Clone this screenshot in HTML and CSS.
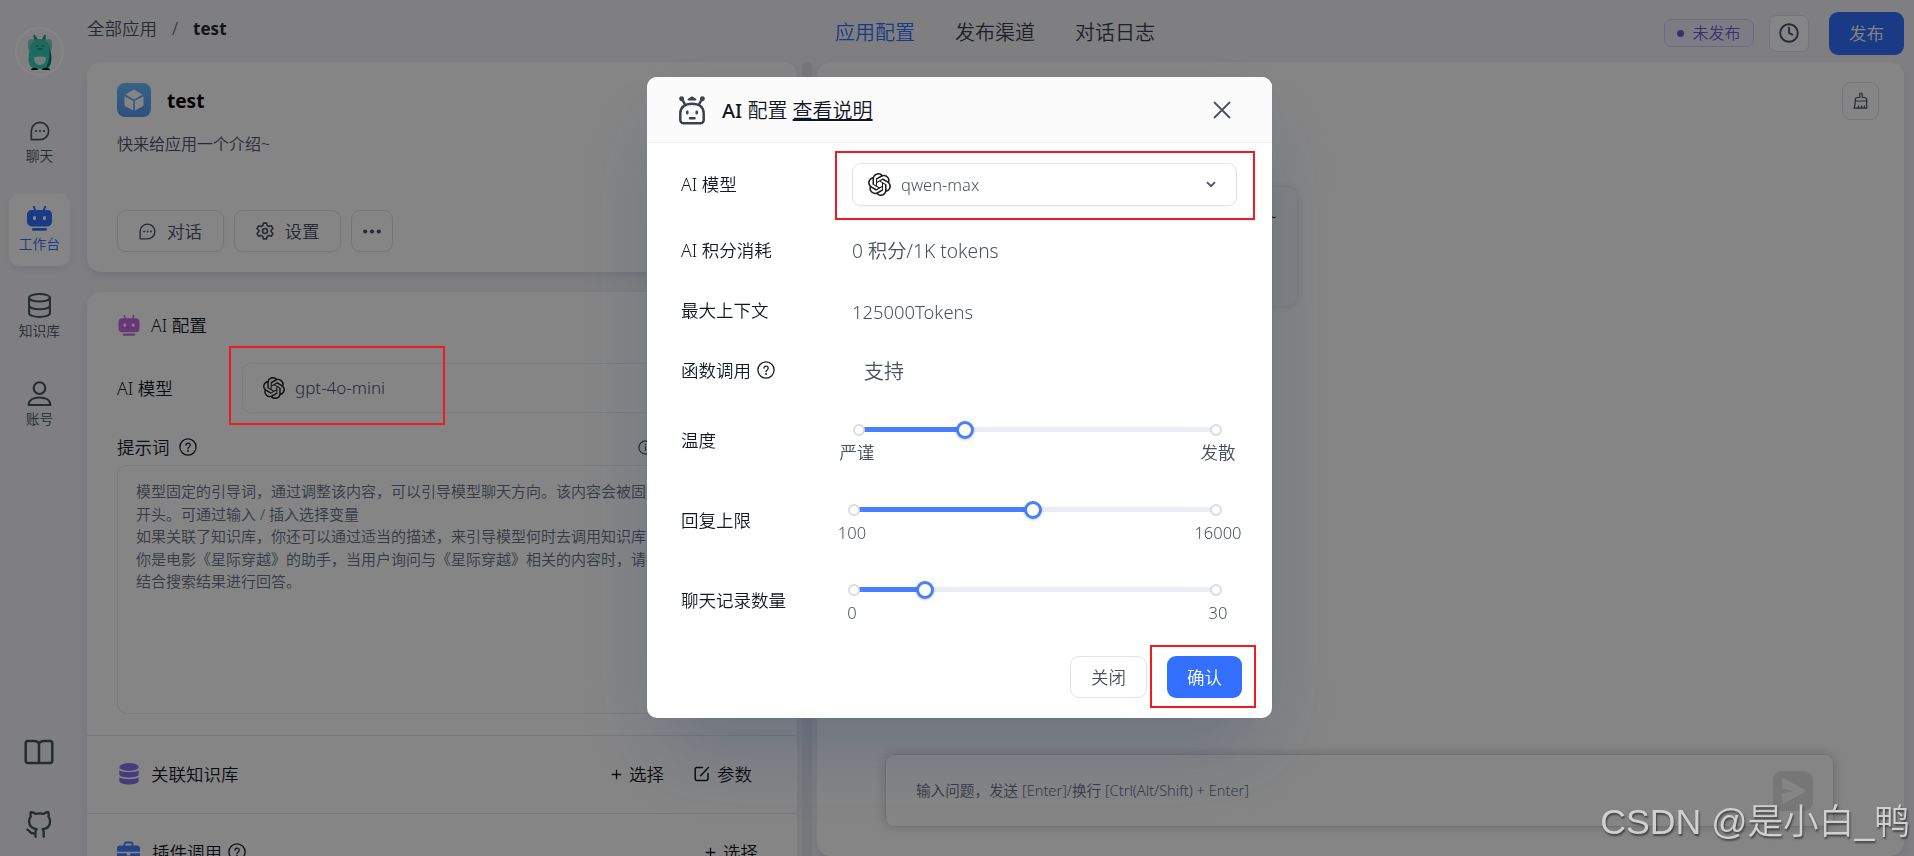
FILE: index.html
```
<!DOCTYPE html>
<html lang="zh-CN">
<head>
    <meta charset="UTF-8">
    <meta name="viewport" content="width=device-width, initial-scale=1.0">
    <title>test - 应用配置</title>
    <link rel="stylesheet" href="styles.css">
</head>
<body>
    <!-- Shared icons -->
    <svg class="sprite" xmlns="http://www.w3.org/2000/svg">
        <symbol id="i-chat" viewBox="0 0 24 24">
            <path d="M1.600 22.400V12A10.400 10.400 0 1 1 12 22.400z" fill="none" stroke="currentColor" stroke-width="2" stroke-linejoin="round"/>
            <circle cx="7.200" cy="12" r="1.300" fill="currentColor"/>
            <circle cx="12" cy="12" r="1.300" fill="currentColor"/>
            <circle cx="16.800" cy="12" r="1.300" fill="currentColor"/>
        </symbol>
        <symbol id="i-robot" viewBox="0 0 24 24">
            <path d="M6.600.6 7.800 4M17.400.6 16.200 4" stroke="currentColor" stroke-width="1.800" stroke-linecap="round"/>
            <path fill="currentColor" fill-rule="evenodd" d="M4.500 3.800h15A4.500 4.500 0 0 1 24 8.300v6.800a4.500 4.500 0 0 1-4.500 4.500h-15A4.500 4.500 0 0 1 0 15.100V8.300a4.500 4.500 0 0 1 4.500-4.500zM7.200 9.600a1.500 1.500 0 0 0-1.500 1.500v1a1.500 1.500 0 0 0 3 0v-1a1.500 1.500 0 0 0-1.500-1.500zm9.600 0a1.500 1.500 0 0 0-1.500 1.500v1a1.500 1.500 0 0 0 3 0v-1a1.500 1.500 0 0 0-1.500-1.500z"/>
            <rect x="4.800" y="21.200" width="14.400" height="2.500" rx="1.200" fill="currentColor"/>
        </symbol>
        <symbol id="i-openai" viewBox="0 0 24 24">
            <path fill="currentColor" d="M22.2819 9.8211a5.9847 5.9847 0 0 0-.5157-4.9108 6.0462 6.0462 0 0 0-6.5098-2.9A6.0651 6.0651 0 0 0 4.9807 4.1818a5.9847 5.9847 0 0 0-3.9977 2.9 6.0462 6.0462 0 0 0 .7427 7.0966 5.98 5.98 0 0 0 .511 4.9107 6.051 6.051 0 0 0 6.5146 2.9001A5.9847 5.9847 0 0 0 13.2599 24a6.0557 6.0557 0 0 0 5.7718-4.2058 5.9894 5.9894 0 0 0 3.9977-2.9001 6.0557 6.0557 0 0 0-.7475-7.0729zm-9.022 12.6081a4.4755 4.4755 0 0 1-2.8764-1.0408l.1419-.0804 4.7783-2.7582a.7948.7948 0 0 0 .3927-.6813v-6.7369l2.02 1.1686a.071.071 0 0 1 .038.052v5.5826a4.504 4.504 0 0 1-4.4945 4.4944zm-9.6607-4.1254a4.4708 4.4708 0 0 1-.5346-3.0137l.142.0852 4.783 2.7582a.7712.7712 0 0 0 .7806 0l5.8428-3.3685v2.3324a.0804.0804 0 0 1-.0332.0615L9.74 19.9502a4.4992 4.4992 0 0 1-6.1408-1.6464zM2.3408 7.8956a4.485 4.485 0 0 1 2.3655-1.9728V11.6a.7664.7664 0 0 0 .3879.6765l5.8144 3.3543-2.0201 1.1685a.0757.0757 0 0 1-.071 0l-4.8303-2.7865A4.504 4.504 0 0 1 2.3408 7.872zm16.5963 3.8558L13.1038 8.364 15.1192 7.2a.0757.0757 0 0 1 .071 0l4.8303 2.7913a4.4944 4.4944 0 0 1-.6765 8.1042v-5.6772a.79.79 0 0 0-.407-.667zm2.0107-3.0231l-.142-.0852-4.7735-2.7818a.7759.7759 0 0 0-.7854 0L9.409 9.2297V6.8974a.0662.0662 0 0 1 .0284-.0615l4.8303-2.7866a4.4992 4.4992 0 0 1 6.6802 4.66zM8.3065 12.863l-2.02-1.1638a.0804.0804 0 0 1-.038-.0567V6.0742a4.4992 4.4992 0 0 1 7.3757-3.4537l-.142.0805L8.704 5.459a.7948.7948 0 0 0-.3927.6813zm1.0976-2.3654l2.602-1.4998 2.6069 1.4998v2.9994l-2.5974 1.4997-2.6067-1.4997Z"/>
        </symbol>
        <symbol id="i-help" viewBox="0 0 24 24">
            <g fill="none" stroke="currentColor" stroke-width="1.700" stroke-linecap="round">
                <circle cx="12" cy="12" r="10.800"/>
                <path d="M9.300 9.500a2.800 2.800 0 1 1 4.300 2.400c-1 .6-1.600 1.200-1.600 2.300"/>
            </g>
            <circle cx="12" cy="17.300" r="1.200" fill="currentColor"/>
        </symbol>
        <symbol id="i-plus" viewBox="0 0 12 12">
            <path d="M6 .8v10.400M.8 6h10.400" stroke="currentColor" stroke-width="1.400"/>
        </symbol>
    </svg>

    <div class="app">
        <nav class="sidebar">
            <div class="avatar">
                <svg width="26" height="38" viewBox="0 0 26 38">
                    <path d="M8 9 7 2l4 6M15 8l3-6v7" fill="#7d9c96" stroke="#2c9c8a" stroke-width="1.500"/>
                    <rect x="1" y="6" width="7" height="12" rx="3.500" fill="#8fc9bd"/>
                    <rect x="18" y="6" width="7" height="12" rx="3.500" fill="#8fc9bd"/>
                    <path d="M13 6c6 0 9 4 10 9s2 8 1 14-4 7-11 7-10-1-11-7 0-9 1-14 4-9 10-9z" fill="#36cdb4"/>
                    <path d="M22 14c2 5 3 10 2 15s-3 6-5 6c3-6 4-13 3-21z" fill="#0f7c72"/>
                    <path d="M7 25c0-2 12-2 12 0s-1 7-6 7-6-5-6-7z" fill="#dbeee6"/>
                    <path d="M9 13h2M15 13h2M10.500 16h5" stroke="#1c6058" stroke-width="1.200"/>
                    <path d="M4 37c0-3 7-3 7 0zM15 37c0-3 8-3 8 0z" fill="#111"/>
                </svg>
            </div>
            <a class="nav-item">
                <svg class="nav-icon small"><use href="#i-chat"/></svg>
                <span>聊天</span>
            </a>
            <a class="nav-item active">
                <svg class="nav-icon"><use href="#i-robot"/></svg>
                <span>工作台</span>
            </a>
            <a class="nav-item">
                <svg class="nav-icon" viewBox="0 0 24 24" fill="none" stroke="currentColor" stroke-width="2">
                    <ellipse cx="12" cy="4.600" rx="10" ry="3.600"/>
                    <path d="M2 4.600v14.800C2 21.400 6.500 23 12 23s10-1.600 10-3.600V4.600M2 12c0 2 4.500 3.600 10 3.600S22 14 22 12"/>
                </svg>
                <span>知识库</span>
            </a>
            <a class="nav-item">
                <svg class="nav-icon" viewBox="0 0 24 24" fill="none" stroke="currentColor" stroke-width="2" stroke-linejoin="round">
                    <circle cx="12" cy="6.800" r="5.600"/>
                    <path d="M1.600 23c0-4.800 4.600-7.200 10.400-7.200S22.400 18.200 22.400 23z"/>
                </svg>
                <span>账号</span>
            </a>
            <div class="nav-links">
                <svg width="30" height="26" viewBox="0 0 30 26" fill="none" stroke="currentColor" stroke-width="2.500" stroke-linejoin="round">
                    <path d="M15 4.500C14 2.700 12.500 2 10 2H4a2.300 2.300 0 0 0-2.300 2.300v17.400A2.300 2.300 0 0 0 4 24h22a2.300 2.300 0 0 0 2.300-2.300V4.300A2.300 2.300 0 0 0 26 2h-6c-2.500 0-4 .7-5 2.500V24"/>
                </svg>
                <svg width="28" height="28" viewBox="0 0 24 24" fill="none" stroke="currentColor" stroke-width="2" stroke-linecap="round" stroke-linejoin="round">
                    <path d="M9 19c-5 1.500-5-2.500-7-3m14 6v-3.870a3.370 3.370 0 0 0-.94-2.610c3.140-.35 6.440-1.540 6.440-7A5.440 5.440 0 0 0 20 4.770 5.070 5.070 0 0 0 19.910 1S18.730.65 16 2.480a13.380 13.380 0 0 0-7 0C6.270.65 5.090 1 5.090 1A5.070 5.070 0 0 0 5 4.770a5.440 5.440 0 0 0-1.500 3.780c0 5.420 3.300 6.610 6.440 7A3.370 3.370 0 0 0 9 18.130V22"/>
                </svg>
            </div>
        </nav>

        <div class="page">
            <header class="topbar">
                <div class="breadcrumb">
                    <span>全部应用</span>
                    <span class="slash">/</span>
                    <b>test</b>
                </div>
                <div class="tabs">
                    <a class="tab active">应用配置</a>
                    <a class="tab">发布渠道</a>
                    <a class="tab">对话日志</a>
                </div>
                <div class="actions">
                    <span class="tag"><i class="dot"></i>未发布</span>
                    <button class="icon-btn history">
                        <svg width="20" height="20" viewBox="0 0 20 20" fill="none" stroke="currentColor" stroke-width="1.900" stroke-linecap="round">
                            <circle cx="10" cy="10" r="8.800"/>
                            <path d="M10 4.800V10l3.400 1.700"/>
                        </svg>
                    </button>
                    <button class="publish">发布</button>
                </div>
            </header>

            <div class="columns">
                <div class="edit-col">
                    <section class="card intro">
                        <div class="app-name">
                            <div class="app-logo">
                                <svg width="20" height="22" viewBox="0 0 20 22" fill="#fff">
                                    <path d="M10 .6 18.600 5.500 10 10.400 1.400 5.500z"/>
                                    <path d="M.5 7.200 9.200 12.100V21.600L1.300 17.200C.8 16.900.5 16.500.5 16z"/>
                                    <path d="M19.500 7.200 10.800 12.100V21.600L18.700 17.200c.5-.3.8-.7.8-1.200z"/>
                                </svg>
                            </div>
                            <b>test</b>
                        </div>
                        <p class="desc">快来给应用一个介绍~</p>
                        <div class="btn-row">
                            <button class="outline-btn"><svg width="17" height="17"><use href="#i-chat"/></svg>对话</button>
                            <button class="outline-btn">
                                <svg width="18" height="18" viewBox="0 0 24 24" fill="none" stroke="currentColor" stroke-width="2.200" stroke-linejoin="round">
                                    <path d="M9.900 1.500h4.200l.9 3.200 2.200 1.300 3.300-.9 2.100 3.600L20.200 11v2l2.400 2.300-2.100 3.600-3.300-.9-2.200 1.300-.9 3.200H9.900L9 19.300 6.800 18l-3.300.9-2.100-3.600L3.800 13v-2L1.400 8.700l2.100-3.600 3.300.9L9 4.700z"/>
                                    <circle cx="12" cy="12" r="3.300"/>
                                </svg>设置</button>
                            <button class="outline-btn more">
                                <svg width="18" height="5" viewBox="0 0 18 5" fill="currentColor">
                                    <circle cx="2.200" cy="2.500" r="2.100"/><circle cx="9" cy="2.500" r="2.100"/><circle cx="15.800" cy="2.500" r="2.100"/>
                                </svg>
                            </button>
                        </div>
                    </section>

                    <section class="card config">
                        <div class="section ai">
                            <div class="section-title">
                                <svg class="purple" width="22" height="21"><use href="#i-robot"/></svg>
                                <span>AI 配置</span>
                            </div>
                            <div class="model-row">
                                <span>AI 模型</span>
                                <div class="model-select"><svg width="22" height="22"><use href="#i-openai"/></svg>gpt-4o-mini</div>
                            </div>
                            <div class="prompt-title">
                                <span>提示词</span>
                                <svg width="18" height="18"><use href="#i-help"/></svg>
                                <svg class="info" width="15" height="15" viewBox="0 0 16 16" fill="none" stroke="currentColor" stroke-width="1.300">
                                    <circle cx="8" cy="8" r="7"/>
                                    <path d="M8 7v4.500M8 4.200v1.500"/>
                                </svg>
                            </div>
                            <div class="prompt">
                                模型固定的引导词，通过调整该内容，可以引导模型聊天方向。该内容会被固定在上下文的<br>
                                开头。可通过输入 / 插入选择变量<br>
                                如果关联了知识库，你还可以通过适当的描述，来引导模型何时去调用知识库搜索。例如：<br>
                                你是电影《星际穿越》的助手，当用户询问与《星际穿越》相关的内容时，请搜索知识库并<br>
                                结合搜索结果进行回答。
                            </div>
                        </div>
                        <div class="section line">
                            <svg class="violet" width="20" height="22" viewBox="0 0 20 22" fill="currentColor">
                                <ellipse cx="10" cy="4" rx="9.700" ry="3.900"/>
                                <path d="M.3 7.300C3 9.800 17 9.800 19.700 7.300v3.900c0 4.400-19.400 4.400-19.400 0z"/>
                                <path d="M.3 14.300c2.700 2.500 16.700 2.500 19.400 0v3.500c0 5-19.400 5-19.400 0z"/>
                            </svg>
                            <span>关联知识库</span>
                            <div class="ops">
                                <span class="op"><svg width="11" height="11"><use href="#i-plus"/></svg>选择</span>
                                <span class="op">
                                    <svg width="16" height="16" viewBox="0 0 16 16" fill="none" stroke="currentColor" stroke-width="1.500" stroke-linecap="round" stroke-linejoin="round">
                                        <path d="M8.500 1.500H3A1.800 1.800 0 0 0 1.200 3.300v9.400A1.800 1.800 0 0 0 3 14.500h9.200a1.800 1.800 0 0 0 1.800-1.800V7.500M6.600 9.800 14.400 1.500"/>
                                    </svg>参数</span>
                            </div>
                        </div>
                        <div class="section line">
                            <svg class="blue" width="23" height="22" viewBox="0 0 23 22">
                                <path d="M7.500 5V3.200A1.700 1.700 0 0 1 9.200 1.500h4.600a1.700 1.700 0 0 1 1.700 1.700V5" fill="none" stroke="currentColor" stroke-width="1.800"/>
                                <path fill="currentColor" d="M3 4.600h17a3 3 0 0 1 3 3v3.200H0V7.600a3 3 0 0 1 3-3zM0 12.200h9.800v2.400h3.400v-2.400H23V19a2.500 2.500 0 0 1-2.500 2.500h-18A2.500 2.500 0 0 1 0 19z"/>
                            </svg>
                            <span>插件调用</span>
                            <svg class="tip" width="18" height="18"><use href="#i-help"/></svg>
                            <div class="ops plugin">
                                <span class="op"><svg width="11" height="11"><use href="#i-plus"/></svg>选择</span>
                            </div>
                        </div>
                    </section>
                </div>

                <div class="splitter"></div>

                <section class="chat-card">
                    <button class="icon-btn clear">
                        <svg width="16" height="18" viewBox="0 0 16 18" fill="none" stroke="currentColor" stroke-width="1.200" stroke-linejoin="round">
                            <path d="M6.700 5.500V2.300a1.300 1.300 0 0 1 2.600 0v3.200h2.200A2.200 2.200 0 0 1 13.700 7.700V9H2.300V7.700A2.200 2.200 0 0 1 4.500 5.500zM2.300 9c0 3-.3 5-1.300 7.200h12.700V9M5 16.200l.8-2.700M8.200 16.200l.7-2.700M11.200 16.200l.4-2.700"/>
                        </svg>
                    </button>
                    <div class="welcome">~</div>
                    <div class="chat-input">
                        <span>输入问题，发送 [Enter]/换行 [Ctrl(Alt/Shift) + Enter]</span>
                        <div class="send">
                            <svg width="24" height="26" viewBox="0 0 24 26" fill="currentColor">
                                <path d="M0 1.800C0 .6 1 0 2 .6l21 11.300c1 .6 1 1.600 0 2.200L2 25.400C1 26 0 25.400 0 24.200V15.500l12-2.500L0 10.500z"/>
                            </svg>
                        </div>
                    </div>
                </section>
            </div>
        </div>
    </div>

    <div class="overlay">
        <div class="modal">
            <div class="modal-header">
                <svg width="28" height="30" viewBox="0 0 28 30" fill="none" stroke="#3a4250" stroke-width="2.500" stroke-linecap="round" stroke-linejoin="round">
                    <path d="M2.300 18.500C2.300 12 7 8.800 14 8.800s11.700 3.200 11.700 9.700V25a3.300 3.300 0 0 1-3.300 3.300H5.600A3.300 3.300 0 0 1 2.300 25z"/>
                    <path d="M7 9.500 4 4M21 9.500 24 4"/>
                    <path d="M10.500 4.600 14 2.300l3.500 2.300z" stroke-width="1.800"/>
                    <path d="M9.300 16.800v1.400M18.700 16.800v1.400M12 23.300h4.500"/>
                    <circle cx="3.600" cy="3.700" r="1.200"/><circle cx="24.400" cy="3.700" r="1.200"/>
                </svg>
                <div class="modal-title"><b>AI</b> 配置 <a>查看说明</a></div>
                <svg class="close" width="18" height="18" viewBox="0 0 18 18" stroke="currentColor" stroke-width="1.800" stroke-linecap="round">
                    <path d="M1.500 1.500l15 15M16.500 1.500l-15 15"/>
                </svg>
            </div>
            <div class="modal-body">
                <div class="row first">
                    <label>AI 模型</label>
                    <div class="select">
                        <svg width="23" height="23"><use href="#i-openai"/></svg>
                        <span>qwen-max</span>
                        <svg class="chevron" width="10" height="7" viewBox="0 0 10 7" fill="none" stroke="currentColor" stroke-width="1.800"><path d="M1 1.200 5 5.200 9 1.200"/></svg>
                    </div>
                </div>
                <div class="row credits"><label>AI 积分消耗</label><span class="value">0 积分/1K tokens</span></div>
                <div class="row"><label>最大上下文</label><span class="value context">125000Tokens</span></div>
                <div class="row last"><label>函数调用<svg width="18" height="18"><use href="#i-help"/></svg></label><span class="value indent">支持</span></div>

                <div class="slider-row">
                    <label>温度</label>
                    <div class="slider inset">
                        <div class="rail">
                            <div class="fill" style="width: 29.7%"></div>
                            <i class="mark" style="left: 0"></i>
                            <i class="mark" style="left: 100%"></i>
                            <i class="thumb" style="left: 29.7%"></i>
                        </div>
                        <div class="marks"><span>严谨</span><span>发散</span></div>
                    </div>
                </div>
                <div class="slider-row">
                    <label>回复上限</label>
                    <div class="slider">
                        <div class="rail">
                            <div class="fill" style="width: 49.5%"></div>
                            <i class="mark" style="left: 0"></i>
                            <i class="mark" style="left: 100%"></i>
                            <i class="thumb" style="left: 49.5%"></i>
                        </div>
                        <div class="marks"><span>100</span><span>16000</span></div>
                    </div>
                </div>
                <div class="slider-row">
                    <label>聊天记录数量</label>
                    <div class="slider">
                        <div class="rail">
                            <div class="fill" style="width: 19.5%"></div>
                            <i class="mark" style="left: 0"></i>
                            <i class="mark" style="left: 100%"></i>
                            <i class="thumb" style="left: 19.5%"></i>
                        </div>
                        <div class="marks"><span>0</span><span>30</span></div>
                    </div>
                </div>
            </div>
            <div class="modal-footer">
                <button class="btn-close">关闭</button>
                <button class="btn-ok">确认</button>
            </div>
        </div>
    </div>

    <!-- Callouts and watermark -->
    <div class="callout c-app-model"></div>
    <div class="callout c-model"></div>
    <div class="callout c-confirm"></div>
    <div class="watermark">CSDN @是小白_鸭</div>
</body>
</html>
```
FILE: styles.css
```
* {
    margin: 0;
    padding: 0;
    box-sizing: border-box;
}

body {
    font-family: "Noto Sans", "Noto Sans CJK SC", sans-serif;
    font-size: 17.5px;
    line-height: 1.5;
    font-weight: 350;
    color: #111824;
    background: #f4f4f7;
    height: 100vh;
    overflow: hidden;
}

button {
    font: inherit;
    background: none;
    border: none;
}

svg {
    flex-shrink: 0;
    display: block;
}

.sprite {
    position: absolute;
    width: 0;
    height: 0;
}

.app {
    display: flex;
    height: 856px;
}

/* Sidebar */
.sidebar {
    width: 87px;
    padding: 27px 0 17px 9px;
    display: flex;
    flex-direction: column;
    color: #485264;
}

.avatar {
    width: 49px;
    height: 49px;
    margin: 0 0 30px 6px;
    border: 2px solid #fff;
    border-radius: 50%;
    display: flex;
    align-items: center;
    justify-content: center;
}

.nav-item {
    width: 61px;
    height: 72px;
    margin-bottom: 15.5px;
    border-radius: 10px;
    display: flex;
    flex-direction: column;
    align-items: center;
    justify-content: center;
    gap: 3px;
    font-size: 13.75px;
    line-height: 20px;
}

.nav-item.active {
    background: #fff;
    color: #3370ff;
    box-shadow: 0 4px 6px rgba(19, 51, 107, 0.08);
}

.nav-icon {
    width: 25px;
    height: 25px;
}

.nav-icon.small {
    width: 20px;
    height: 20px;
    margin: 3px 0 2px;
}

.nav-links {
    margin-top: auto;
    width: 60px;
    display: flex;
    flex-direction: column;
    align-items: center;
    gap: 46px;
}

/* Top bar */
.page {
    flex: 1;
    display: flex;
    flex-direction: column;
}

.topbar {
    height: 62px;
    display: grid;
    grid-template-columns: 748px 1fr auto;
    padding-right: 10px;
}

.breadcrumb {
    display: flex;
    height: 57px;
    align-items: center;
    color: #485264;
}

.slash {
    margin: 0 15px;
}

.breadcrumb b {
    color: #24282c;
    font-size: 17px;
}

.tabs {
    display: flex;
    align-items: center;
    gap: 40px;
    font-size: 20px;
    color: #383f50;
}

.tab.active {
    color: #3370ff;
}

.actions {
    display: flex;
    align-items: center;
    height: 66px;
}

.tag {
    width: 90px;
    height: 28px;
    display: flex;
    align-items: center;
    justify-content: center;
    gap: 8px;
    font-size: 16px;
    color: #6f5dd7;
    background: #f0eeff;
    border: 1px solid #d3caff;
    border-radius: 7px;
}

.dot {
    width: 7px;
    height: 7px;
    border-radius: 50%;
    background: #6f5dd7;
}

.icon-btn {
    display: flex;
    align-items: center;
    justify-content: center;
    background: #fff;
    border: 1px solid #e1e3ea;
    color: #485264;
}

.history {
    width: 40px;
    height: 37px;
    margin: 0 20px 0 15px;
    border-radius: 7px;
}

.publish {
    width: 75px;
    height: 43px;
    border-radius: 9px;
    background: #3370ff;
    color: #fff;
}

/* Left column */
.columns {
    flex: 1;
    display: flex;
    min-height: 0;
}

.edit-col {
    width: 710px;
    display: flex;
    flex-direction: column;
    gap: 20px;
}

.card {
    background: #fff;
    border-radius: 14px;
    box-shadow: 0 4px 10px rgba(19, 51, 107, 0.1);
}

.intro {
    height: 210px;
    padding: 21px 30px;
}

.app-name {
    display: flex;
    align-items: center;
    gap: 16px;
    height: 34px;
    font-size: 19px;
    color: #000;
}

.app-name b {
    padding-top: 2px;
}

.app-logo {
    width: 34px;
    height: 34px;
    border-radius: 8px;
    background: linear-gradient(#67bffb, #5a97f5);
    display: flex;
    align-items: center;
    justify-content: center;
}

.desc {
    margin-top: 15px;
    height: 78px;
    font-size: 16px;
    color: #485264;
}

.btn-row {
    display: flex;
    gap: 10px;
}

.outline-btn {
    width: 107px;
    height: 42px;
    display: flex;
    align-items: center;
    justify-content: center;
    gap: 11px;
    border: 1px solid #dfe2ea;
    border-radius: 9px;
    color: #485264;
    box-shadow: 0 1px 2px rgba(19, 51, 107, 0.05);
}

.outline-btn.more {
    width: 42px;
}

.config {
    height: 600px;
    flex-shrink: 0;
}

.section.ai {
    height: 443px;
    padding: 19px 25px 0 30px;
}

.section-title {
    display: flex;
    align-items: center;
    gap: 11px;
    height: 28px;
    padding-left: 1px;
}

.purple {
    color: #c66be3;
}

.violet {
    color: #8774ee;
    margin-left: 2px;
}

.blue {
    color: #487fff;
}

.model-row {
    display: flex;
    align-items: center;
    height: 50px;
    margin-top: 24px;
}

.model-row > span {
    width: 125px;
}

.model-select {
    flex: 1;
    height: 50px;
    padding-left: 20px;
    display: flex;
    align-items: center;
    gap: 10px;
    border: 1px solid #e8ebf0;
    border-radius: 9px;
    color: #485264;
    font-size: 17px;
}

.model-select svg,
.select > svg:first-child {
    color: #1c1c1c;
}

.prompt-title {
    display: flex;
    align-items: center;
    gap: 9px;
    height: 30px;
    margin-top: 19px;
}

.prompt-title .info {
    margin-left: 432px;
    color: #485264;
}

.prompt {
    height: 249px;
    margin-top: 3px;
    padding: 14px 18px;
    font-size: 15px;
    line-height: 22.5px;
    white-space: nowrap;
    overflow: hidden;
    color: #667085;
    border: 1px solid #e8ebf0;
    border-radius: 10px;
}

.section.line {
    height: 78px;
    padding: 0 30px 1px;
    display: flex;
    align-items: center;
    border-top: 1px solid #e4e7ed;
}

.section.line > span {
    margin-left: 12px;
}

.section.line > .tip {
    margin-left: 6px;
}

.ops {
    margin-left: auto;
    margin-right: 15px;
    display: flex;
    gap: 30px;
}

.ops.plugin {
    margin-right: 9px;
}

.op {
    display: flex;
    align-items: center;
    gap: 7px;
}

.splitter {
    width: 10px;
    margin: 0 5px 0 5px;
    border-radius: 4px 4px 0 0;
    background: #e3e4ec;
}

/* Chat debug panel */
.chat-card {
    flex: 1;
    margin-right: 10px;
    background: #fff;
    border-radius: 14px;
    box-shadow: 0 4px 10px rgba(19, 51, 107, 0.1);
    display: flex;
    flex-direction: column;
}

.clear {
    width: 37px;
    height: 38px;
    margin: 20px 25px 0 auto;
    border-radius: 9px;
}

.welcome {
    width: 411px;
    height: 119px;
    margin: 67px 0 0 69px;
    padding: 16px 20px;
    text-align: right;
    background: #f7f8fb;
    border-radius: 10px;
    box-shadow: 0 0 8px rgba(0, 0, 0, 0.15);
}

.chat-input {
    height: 73px;
    margin: auto 70px 29px 68px;
    padding: 0 20px 0 30px;
    display: flex;
    align-items: center;
    justify-content: space-between;
    border: 1px solid #dcdcdc;
    border-radius: 9px;
    box-shadow: 0 0 12px rgba(0, 0, 0, 0.2);
    font-size: 14.6px;
    color: #667085;
}

.send {
    width: 40px;
    height: 40px;
    padding-left: 2px;
    border-radius: 9px;
    background: #e4e4e4;
    color: #fff;
    display: flex;
    align-items: center;
    justify-content: center;
}

/* Modal */
.overlay {
    position: fixed;
    inset: 0;
    padding: 77px 0 0 5px;
    display: flex;
    align-items: flex-start;
    justify-content: center;
    background: rgba(0, 0, 0, 0.48);
}

.modal {
    width: 625px;
    height: 641px;
    background: #fff;
    border-radius: 10px;
    box-shadow: 0 0 1px rgba(19, 51, 107, 0.2), 0 40px 80px -15px rgba(19, 51, 107, 0.25);
}

.modal-header {
    height: 66px;
    padding: 0 41px 0 31px;
    display: flex;
    align-items: center;
    background: #fbfbfc;
    border-bottom: 1px solid #f4f4f7;
    border-radius: 10px 10px 0 0;
}

.modal-title {
    margin-left: 16px;
    padding-top: 3px;
    font-size: 20px;
}

.modal-title b {
    font-weight: 500;
}

.modal-title a {
    text-decoration: underline;
}

.close {
    margin-left: auto;
    color: #485264;
}

.modal-body {
    padding: 20px 35px 0 34px;
}

.row {
    display: flex;
    align-items: center;
    height: 40px;
    margin-bottom: 20px;
}

.row.first {
    height: 43px;
    margin-bottom: 24px;
}

.row.last {
    margin-bottom: 10px;
}

.row label {
    width: 171px;
    display: flex;
    align-items: center;
    gap: 6px;
}

.select {
    width: 385px;
    height: 43px;
    padding: 0 20px 0 15px;
    display: flex;
    align-items: center;
    gap: 10px;
    border: 1px solid #dfe2ea;
    border-radius: 9px;
    box-shadow: 0 1px 2px rgba(19, 51, 107, 0.05);
    color: #485264;
}

.select span {
    padding-top: 2px;
    font-size: 16.5px;
}

.chevron {
    margin-left: auto;
}

.value {
    padding-top: 3px;
    font-size: 19.2px;
    color: #485264;
}

.value.context {
    font-size: 18.4px;
}

.value.indent {
    margin-left: 12px;
    font-size: 20px;
}

.slider-row {
    display: flex;
    height: 80px;
}

.slider-row label {
    width: 173px;
    line-height: 80px;
}

.slider {
    width: 362px;
    padding-top: 27px;
}

.slider.inset {
    width: 357px;
    margin-left: 5px;
}

.rail {
    position: relative;
    height: 5px;
    border-radius: 3px;
    background: #ebedf5;
}

.fill {
    height: 5px;
    background: #487fff;
}

.mark,
.thumb {
    position: absolute;
    top: 50%;
    transform: translate(-50%, -50%);
    border-radius: 50%;
    background: #fff;
}

.mark {
    width: 12px;
    height: 12px;
    border: 2px solid #d9dce1;
}

.thumb {
    width: 18px;
    height: 18px;
    border: 3px solid #487fff;
    box-shadow: 0 1px 3px rgba(0, 0, 0, 0.2);
}

.marks {
    display: flex;
    justify-content: space-between;
    margin: 9px -32px 0;
    color: #485264;
}

.marks span {
    width: 60px;
    text-align: center;
    font-size: 16.5px;
}

.inset .marks {
    margin-top: 7px;
}

.inset .marks span {
    font-size: 17.5px;
}

.modal-footer {
    display: flex;
    justify-content: flex-end;
    gap: 20px;
    padding: 16px 30px 0;
}

.modal-footer button {
    height: 42px;
    border-radius: 9px;
}

.btn-close {
    width: 77px;
    border: 1px solid #dfe2ea;
    color: #485264;
}

.btn-ok {
    width: 75px;
    background: #3370ff;
    color: #fff;
}

/* Callouts */
.callout {
    position: absolute;
    border: 2px solid #ed1c24;
}

.c-app-model {
    left: 229px;
    top: 346px;
    width: 216px;
    height: 79px;
}

.c-model {
    left: 835px;
    top: 151px;
    width: 420px;
    height: 69px;
}

.c-confirm {
    left: 1150px;
    top: 645px;
    width: 106px;
    height: 63px;
}

.watermark {
    position: absolute;
    right: 4px;
    bottom: 9px;
    font-family: "Liberation Sans", "Noto Sans CJK SC", sans-serif;
    font-size: 35.7px;
    line-height: 50px;
    color: #d0d0d0;
    text-shadow: 1px 2px 2px rgba(0, 0, 0, 0.5);
}
```
